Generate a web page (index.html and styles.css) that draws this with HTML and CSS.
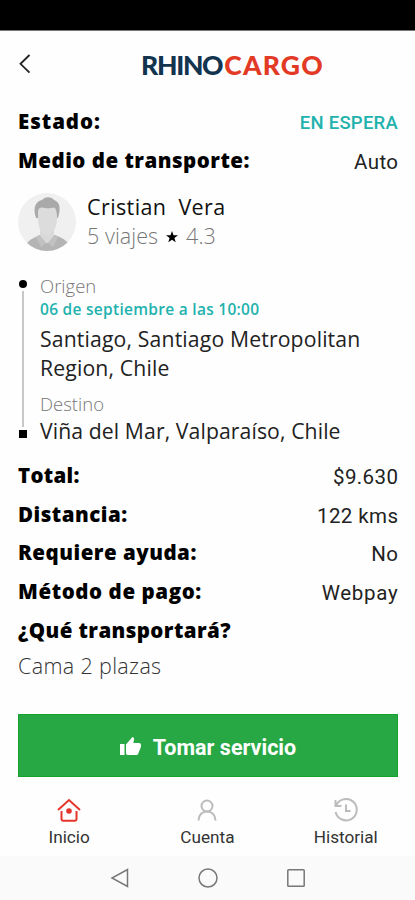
FILE: index.html
```html
<!DOCTYPE html>
<html lang="es">
<head>
<meta charset="utf-8">
<meta name="viewport" content="width=device-width, initial-scale=1">
<title>Rhinocargo</title>
<link rel="stylesheet" href="styles.css">
</head>
<body>
<div class="status-bar"></div>
<header class="header">
  <svg class="back" viewBox="0 0 12 20"><path d="M10.500 1 1.500 9.800l9 8.800"/></svg>
  <div class="logo"><span class="logo-rhino">RHINO</span><span class="logo-cargo">CARGO</span></div>
</header>
<main class="content">
  <div class="row"><span class="label l-estado">Estado:</span><span class="status">EN ESPERA</span></div>
  <div class="row"><span class="label">Medio de transporte:</span><span class="value">Auto</span></div>
  <section class="driver">
    <svg class="avatar" viewBox="0 0 58 58">
      <defs><clipPath id="round"><circle cx="29" cy="29" r="29"/></clipPath></defs>
      <g clip-path="url(#round)">
        <rect width="58" height="58" fill="#f0f0f0"/>
        <path d="M7 58c0-9 5-12 15-16h15c10 4 15 7 15 16z" fill="#b4b4b4"/>
        <path d="M22 36h14v7l-6 7h-2l-6-7z" fill="#d9d9d9"/>
        <path d="m21 42 7 8-5 4-5-10zM37 42l-7 8 5 4 5-10z" fill="#c1c1c1"/>
        <path d="M18 25c-4-12 1-17 6-18 5-5 11-2 12 0 6 2 7 8 4 18z" fill="#a9a9a9"/>
        <path d="M20 18c1-4 3-4 7-3 4 1 8-1 10 0 2 3 2 7 2 11 0 9-5 16-10 16s-9-7-9-16z" fill="#dcdcdc"/>
      </g>
    </svg>
    <div>
      <div class="name">Cristian&nbsp; Vera</div>
      <div class="meta"><span>5 viajes</span><svg class="star" viewBox="0 0 12 12"><path d="m6 0 1.500 4.200H12L8.400 6.900l1.300 4.400L6 8.700l-3.700 2.600 1.300-4.400L0 4.200h4.500z"/></svg><span>4.3</span></div>
    </div>
  </section>
  <section class="route">
    <div class="track"><i class="dot"></i><i class="line"></i><i class="square"></i></div>
    <div class="stops">
      <div class="caption">Origen</div>
      <div class="date">06 de septiembre a las 10:00</div>
      <div class="place">Santiago, Santiago Metropolitan<br>Region, Chile</div>
      <div class="caption destination">Destino</div>
      <div class="place place-end">Viña del Mar, Valparaíso, Chile</div>
    </div>
  </section>
  <div class="row"><span class="label l-total">Total:</span><span class="value">$9.630</span></div>
  <div class="row"><span class="label">Distancia:</span><span class="value">122 kms</span></div>
  <div class="row"><span class="label">Requiere ayuda:</span><span class="value">No</span></div>
  <div class="row"><span class="label l-pago">Método de pago:</span><span class="value l-web">Webpay</span></div>
  <div class="row"><span class="label l-que">¿Qué transportará?</span></div>
  <div class="cargo">Cama 2 plazas</div>
</main>
<button class="action">
  <svg class="thumb" viewBox="0 0 21 18"><path d="M0 7h4.500v11H0zM6 7.500 12.400 0c1.500.4 1.900 1.400 1.700 2.600L13.300 6H19c1.300 0 2 .9 2 2v1.700l-2.800 7c-.4.9-1 1.300-2 1.300H8c-1.300 0-2-.8-2-2z"/></svg>
  <span>Tomar servicio</span>
</button>
<nav class="tabs">
  <a class="tab"><svg class="icon home" viewBox="0 0 24 24"><path d="M1 12 12 2l11 10M4.500 13v8.300c0 .9.500 1.400 1.400 1.400h12.200c.9 0 1.400-.5 1.400-1.400V13"/><circle cx="12" cy="13" r="2.800"/></svg><span>Inicio</span></a>
  <a class="tab"><svg class="icon" viewBox="0 0 24 24"><circle cx="12" cy="8" r="5.500"/><path d="M3.500 22.500c0-5.500 3.500-9 8.500-9s8.500 3.500 8.500 9"/></svg><span>Cuenta</span></a>
  <a class="tab"><svg class="icon" viewBox="0 0 24 24"><path d="M1.500 2v6h6M2 8A10.700 10.700 0 1 1 1.600 14M12 6.500V13h4.500"/></svg><span>Historial</span></a>
</nav>
<footer class="system">
  <svg viewBox="0 0 20 20"><path d="M17.500 1.500v17L2 10z"/></svg>
  <svg viewBox="0 0 20 20"><circle cx="10" cy="10" r="9"/></svg>
  <svg viewBox="0 0 20 20"><rect x="1.800" y="1.800" width="16.400" height="16.400" rx=".8"/></svg>
</footer>
</body>
</html>
```
FILE: styles.css
```css
* { box-sizing: border-box; }
body { margin: 0; width: 415px; height: 900px; display: flex; flex-direction: column; overflow: hidden; background: #fefefe; color: #111; font-family: "Open Sans", sans-serif; }
.status-bar { height: 31px; flex: none; background: #000; border-bottom: 1px solid #777; }
.header { height: 71px; flex: none; display: grid; grid-template-columns: 50px 1fr; align-items: center; }
.back { width: 12px; height: 20px; margin: -6px 0 0 19px; fill: none; stroke: #222; stroke-width: 1.8; }
.logo { display: flex; justify-content: center; font: 900 26.500px/30px Lato, sans-serif; margin-top: -3px; }
.logo-rhino { color: #12344f; letter-spacing: -1.3px; }
.logo-cargo { color: #e23a24; letter-spacing: 1.2px; margin-left: 2px; }
.content { padding: 0 17px 0 18px; height: 612px; flex: none; white-space: nowrap; }
.row { height: 38.750px; display: flex; align-items: center; justify-content: space-between; }
.label { font-size: 20.500px; line-height: 30px; font-weight: 800; letter-spacing: .5px; color: #000; }
.l-estado { letter-spacing: .95px; }
.l-total { letter-spacing: .3px; }
.l-pago { letter-spacing: .58px; }
.l-que { letter-spacing: .42px; }
.value { font: 400 20.500px/30px Roboto, sans-serif; letter-spacing: .4px; color: #222; padding-top: 4px; margin-right: -.4px; }
.l-web { letter-spacing: .7px; }
.status { font: 500 18.500px/28px Roboto, sans-serif; letter-spacing: .25px; color: #22b2ad; padding-top: 4px; }
.driver { display: flex; gap: 11px; height: 90px; padding-top: 13px; }
.avatar { width: 58px; height: 58px; }
.name { font-size: 21.500px; line-height: 29px; letter-spacing: .4px; margin-top: -1px; }
.meta { display: flex; align-items: center; font-size: 21.500px; line-height: 29px; letter-spacing: .05px; font-weight: 300; color: #777; }
.star { width: 12px; height: 12px; margin: 3px 8px 0; fill: #000; }
.route { display: flex; height: 186px; padding-top: 2px; }
.track { width: 10px; height: 158px; margin-top: 8px; display: flex; flex-direction: column; align-items: center; gap: 3px; }
.dot { width: 8px; height: 8px; border-radius: 50%; background: #000; }
.line { width: 2px; flex: 1; background: #c8c8c8; }
.square { width: 8px; height: 8px; background: #000; }
.stops { margin-left: 12px; padding-top: 2px; }
.caption { font-size: 18.500px; line-height: 24px; font-weight: 300; color: #777; }
.date { font-size: 15.500px; line-height: 23px; font-weight: 600; letter-spacing: .28px; color: #22b2ad; }
.place { font-size: 21.200px; line-height: 29px; letter-spacing: .15px; color: #222; padding-top: 3px; }
.destination { margin-top: 10px; }
.place-end { padding-top: 0; letter-spacing: .1px; }
.cargo { font-size: 21.500px; line-height: 33px; letter-spacing: .35px; color: #333; font-weight: 300; }
.action { margin: 0 17px 0 18px; height: 63px; flex: none; border: 1px solid #12a32c; background: #27a844; color: #fff; display: flex; align-items: center; justify-content: center; gap: 12px; font: 700 21.500px/30px Roboto, sans-serif; padding: 4px 0 0; }
.thumb { width: 21px; height: 18px; fill: #fff; margin-top: -4px; }
.tabs { height: 79px; flex: none; display: grid; grid-template-columns: repeat(3, 138.300px); }
.tab { display: flex; flex-direction: column; align-items: center; padding-top: 21px; font: 400 17.200px/24px Roboto, sans-serif; color: #333; }
.icon { width: 24px; height: 24px; margin-bottom: 3px; fill: none; stroke: #bcbcbc; stroke-width: 2; }
.home { stroke: #e5352a; }
.home circle { fill: #e5352a; stroke: none; }
.system { flex: 1; display: flex; justify-content: center; gap: 68px; padding-top: 12px; background: #fafafa; }
.system svg { width: 20px; height: 20px; fill: none; stroke: #777; stroke-width: 1.5; }
```
